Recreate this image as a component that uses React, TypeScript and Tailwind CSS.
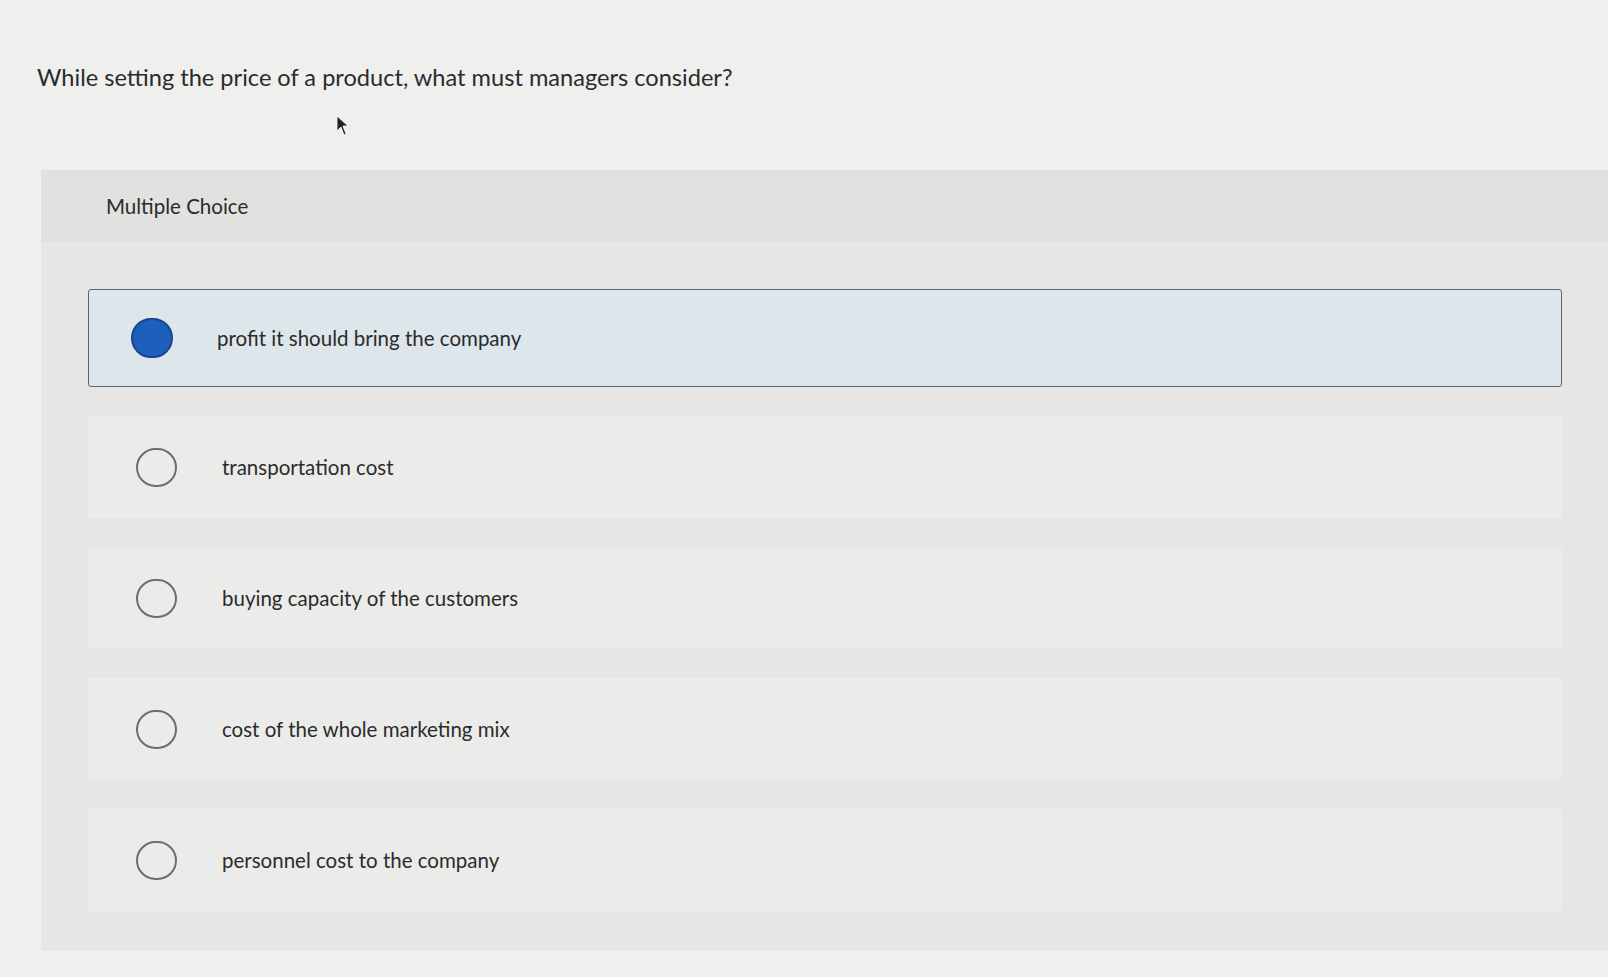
import { useState } from "react";

const options = [
  "profit it should bring the company",
  "transportation cost",
  "buying capacity of the customers",
  "cost of the whole marketing mix",
  "personnel cost to the company",
];

const Radio = ({ checked }: { checked: boolean }) =>
  checked ? (
    <span className="block w-[42px] h-[40px] rounded-full bg-[#1e5fbd] border-2 border-[#17478f] shrink-0" />
  ) : (
    <span className="block w-[41px] h-[39px] rounded-full border-2 border-[#6b6d72] shrink-0" />
  );

const App = () => {
  const [selected, setSelected] = useState(0);

  return (
    <div className="w-[1608px] h-[977px] overflow-hidden bg-[#efefed] text-[#2b2b2d] font-['Lato',sans-serif] relative">
      <div className="pt-[61px] pl-[37px] text-[23.6px] leading-[32px]">
        While setting the price of a product, what must managers consider?
      </div>

      {/* mouse pointer */}
      <svg
        className="absolute left-[336px] top-[115px]"
        width="14"
        height="22"
        viewBox="0 0 14 22"
      >
        <path d="M1 1 L1 16 L5 12 L8 20 L10 19 L7 11 L12 11 Z" fill="#222" stroke="#fff" strokeWidth="0.8" />
      </svg>

      <div className="ml-[41px] mt-[77px] w-[1567px] bg-[#e6e6e4]">
        <div className="h-[72px] bg-[#e1e1df] flex items-center pl-[65px] text-[20.5px]">
          Multiple Choice
        </div>

        <div className="flex flex-col gap-[29px] pt-[47px] pb-[40px] pl-[47px] pr-[46px]">
          {options.map((o, i) => {
            const on = selected === i;
            return (
              <button
                key={o}
                onClick={() => setSelected(i)}
                className={
                  on
                    ? "flex items-center h-[98px] rounded-[3px] border border-[#5b6479] bg-[#dde6ea] pl-[42px] text-left"
                    : "flex items-center h-[102px] bg-[#ebebe9] pl-[48px] text-left"
                }
              >
                <Radio checked={on} />
                <span className={on ? "ml-[44px] text-[20.5px]" : "ml-[45px] text-[20.5px]"}>{o}</span>
              </button>
            );
          })}
        </div>
      </div>
    </div>
  );
};

export default App;
